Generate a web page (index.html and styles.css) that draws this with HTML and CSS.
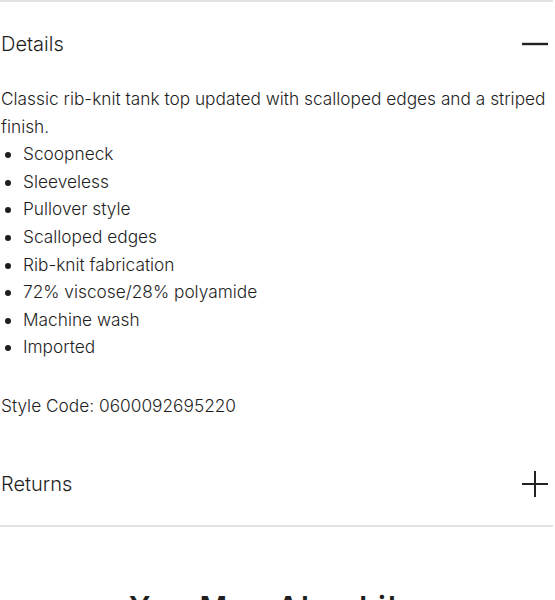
FILE: index.html
```html
<!DOCTYPE html>
<html>
<head>
<meta charset="utf-8">
<link rel="stylesheet" href="styles.css">
</head>
<body>
<div class="accordion">
  <section class="item open">
    <div class="head">
      <span class="title">Details</span>
      <svg class="icon" width="26" height="26" viewBox="0 0 26 26"><path d="M0 13H26" stroke="#222" stroke-width="2.4"/></svg>
    </div>
    <div class="body">
      <p class="desc">Classic rib-knit tank top updated with scalloped edges and a striped finish.</p>
      <ul class="list">
        <li>Scoopneck</li>
        <li>Sleeveless</li>
        <li>Pullover style</li>
        <li>Scalloped edges</li>
        <li>Rib-knit fabrication</li>
        <li>72% viscose/28% polyamide</li>
        <li>Machine wash</li>
        <li>Imported</li>
      </ul>
      <p class="code">Style Code: 0600092695220</p>
    </div>
  </section>
  <section class="item">
    <div class="head">
      <span class="title">Returns</span>
      <svg class="icon" width="26" height="26" viewBox="0 0 26 26"><path d="M0 13H26M13 0V26" stroke="#222" stroke-width="2"/></svg>
    </div>
  </section>
</div>
<h2 class="more">You May Also Like</h2>
</body>
</html>
```
FILE: styles.css
```css
html, body { margin: 0; padding: 0; background: #fff; }
body { font-family: Inter, "Open Sans", sans-serif; color: #1e1e1e; }
.accordion { border-top: 2px solid #e2e2e2; width: 553px; }
.item { border-bottom: 2px solid #e2e2e2; }
.item.open { border-bottom: none; }
.head { display: flex; align-items: center; justify-content: space-between; height: 82px; padding: 1px 5px 0 1px; box-sizing: border-box; }
.title { font-size: 20px; font-weight: 300; }
.icon { display: block; }
.body { font-size: 17.3px; font-weight: 300; line-height: 27.6px; padding: 1px 0 23px 1px; }
.desc { margin: 0; }
.list { margin: 0; padding: 0 0 0 22px; }
.code { margin: 31px 0 0; }
.more { margin: 62px 0 0; text-align: center; font-size: 30px; font-weight: 600; letter-spacing: 2px; }
```
